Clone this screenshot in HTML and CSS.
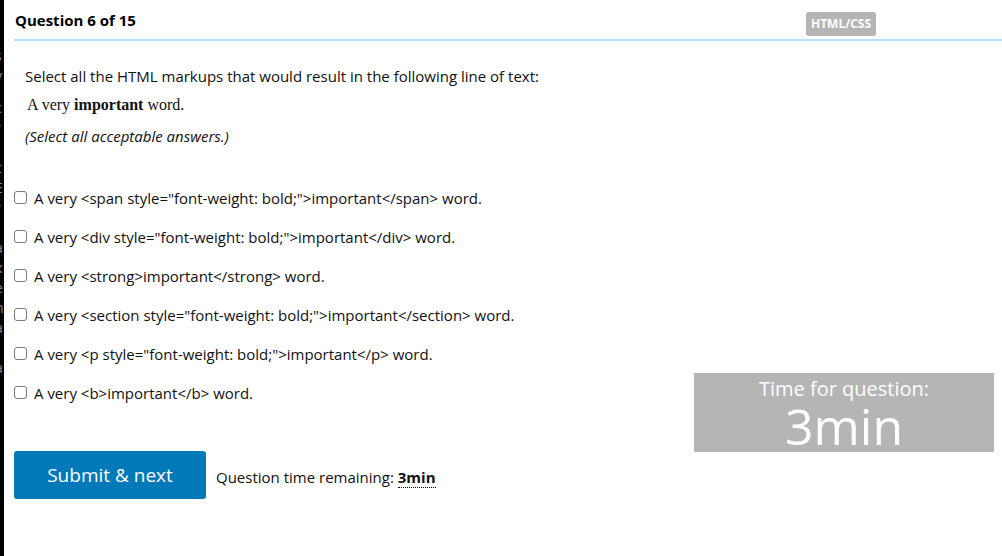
FILE: index.html
```html
<!DOCTYPE html>
<html>
<head>
<meta charset="utf-8">
<link rel="stylesheet" href="styles.css">
</head>
<body>
<div class="page">
  <aside class="sidebar">
    <span>s</span><span>y</span><span class="gap1">c</span><span>r</span><span class="gap2">c</span><span>E</span><span>r</span><span>l</span><span>a</span><span>x</span><span>e</span><span>n</span><span>a</span><span>l</span><span>a</span>
  </aside>
  <main class="main">
    <header class="header">
      <h1 class="title">Question 6 of 15</h1>
      <span class="badge">HTML/CSS</span>
    </header>
    <section class="question">
      <p class="prompt">Select all the HTML markups that would result in the following line of text:</p>
      <p class="sample">A very <b>important</b> word.</p>
      <p class="hint">(Select all acceptable answers.)</p>
    </section>
    <div class="body">
      <div class="left">
        <ul class="options">
          <li class="option"><input type="checkbox" class="check"><span>A very &lt;span style="font-weight: bold;"&gt;important&lt;/span&gt; word.</span></li>
          <li class="option"><input type="checkbox" class="check"><span>A very &lt;div style="font-weight: bold;"&gt;important&lt;/div&gt; word.</span></li>
          <li class="option"><input type="checkbox" class="check"><span>A very &lt;strong&gt;important&lt;/strong&gt; word.</span></li>
          <li class="option"><input type="checkbox" class="check"><span>A very &lt;section style="font-weight: bold;"&gt;important&lt;/section&gt; word.</span></li>
          <li class="option"><input type="checkbox" class="check"><span>A very &lt;p style="font-weight: bold;"&gt;important&lt;/p&gt; word.</span></li>
          <li class="option"><input type="checkbox" class="check"><span>A very &lt;b&gt;important&lt;/b&gt; word.</span></li>
        </ul>
        <div class="actions">
          <button class="submit">Submit &amp; next</button>
          <span class="remaining">Question time remaining: <abbr class="time">3min</abbr></span>
        </div>
      </div>
      <div class="timer">
        <div class="timer-label">Time for question:</div>
        <div class="timer-value">3min</div>
      </div>
    </div>
  </main>
</div>
</body>
</html>
```
FILE: styles.css
```css
* { box-sizing: border-box; }
html, body { margin: 0; padding: 0; background: #fff; }
body {
  font-family: "Open Sans", "Noto Sans", sans-serif;
  color: #111;
  width: 1002px;
  height: 556px;
  overflow: hidden;
}
.page { display: flex; height: 556px; }
.sidebar {
  width: 4px;
  flex: none;
  background: #000;
  overflow: hidden;
  display: flex;
  flex-direction: column;
  align-items: flex-end;
  font-size: 14px;
  line-height: 20px;
  color: #888;
  padding-top: 46px;
}
.sidebar span { display: block; width: 4px; text-indent: -5px; white-space: nowrap; }
.sidebar .gap1 { margin-top: 12px; }
.sidebar .gap2 { margin-top: 20px; }
.main { flex: 1; padding-left: 10px; display: flex; flex-direction: column; }
.header {
  display: flex;
  align-items: flex-start;
  justify-content: space-between;
  height: 41px;
  border-bottom: 2px solid #b5e2f7;
  padding-right: 126px;
}
.title { margin: 9px 0 0 1px; font-size: 15px; line-height: 22px; font-weight: 700; color: #000; }
.badge {
  margin-top: 12px;
  background: #b5b5b5;
  color: #fff;
  font-weight: 700;
  font-size: 12px;
  line-height: 24px;
  height: 24px;
  padding: 0 5px;
  border-radius: 3px;
}
.question { padding: 23px 0 0 11px; }
.question p { margin: 0; }
.prompt { font-size: 15px; line-height: 24px; color: #111; }
.sample {
  font-family: "Liberation Serif", "DejaVu Serif", serif;
  font-size: 16px;
  line-height: 24px;
  margin-top: 5px !important;
  padding-left: 2px;
}
.hint { font-style: italic; font-size: 15px; line-height: 24px; margin-top: 7px !important; }
.body { display: flex; justify-content: space-between; padding-top: 30px; }
.options { list-style: none; margin: 0; padding: 0; }
.option {
  display: flex;
  align-items: center;
  height: 39px;
  font-size: 15px;
}
.check {
  appearance: none;
  -webkit-appearance: none;
  margin: 0 7px 0 0;
  width: 13px;
  height: 13px;
  border: 1px solid #7a7a7a;
  border-radius: 3px;
  background: #fff;
}
.actions { display: flex; align-items: center; margin-top: 39px; }
.submit {
  background: #0079b9;
  color: #fff;
  border: none;
  border-radius: 3px;
  width: 192px;
  height: 48px;
  font-family: "Open Sans", sans-serif;
  font-size: 19px;
  padding: 0;
}
.remaining { margin-left: 10px; font-size: 15px; margin-top: 4px; }
.time { font-weight: 700; text-decoration: none; border-bottom: 1px dotted #000; }
.timer {
  width: 300px;
  height: 79px;
  margin: 195px 8px 0 0;
  background: #b5b5b5;
  color: #fff;
  text-align: center;
  padding-top: 4px;
}
.timer-label { font-size: 20px; line-height: 24px; }
.timer-value { font-size: 50px; line-height: 50px; }
```
